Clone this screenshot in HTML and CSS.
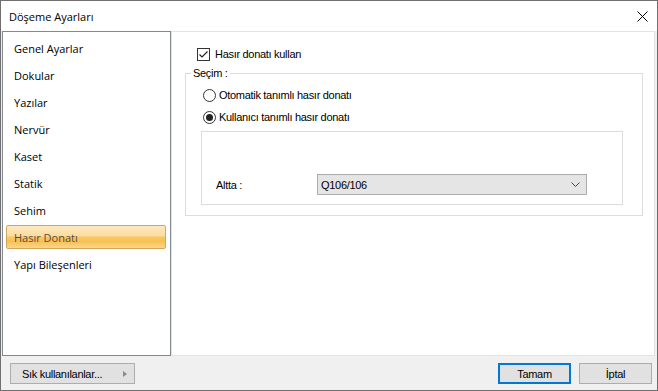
FILE: index.html
```html
<!DOCTYPE html>
<html lang="tr">
<head>
  <meta charset="UTF-8" />
  <meta name="viewport" content="width=device-width, initial-scale=1.0"/>
  <title>Döşeme Ayarları</title>
  <link rel="stylesheet" href="styles.css">
</head>
<body>

  <div class="window">
    <div class="titlebar">
      <span class="title">Döşeme Ayarları</span>
      <svg class="close" width="11" height="11" viewBox="0 0 11 11">
        <path d="M0.5 0.5 L10.5 10.5 M10.5 0.5 L0.5 10.5" stroke="#000" stroke-width="1" fill="none"/>
      </svg>
    </div>

    <div class="main">
      <ul class="nav">
        <li>Genel Ayarlar</li>
        <li>Dokular</li>
        <li>Yazılar</li>
        <li>Nervür</li>
        <li>Kaset</li>
        <li>Statik</li>
        <li>Sehim</li>
        <li class="active">Hasır Donatı</li>
        <li>Yapı Bileşenleri</li>
      </ul>

      <div class="pane">
        <div class="check-row">
          <span class="checkbox">
            <svg width="11" height="11" viewBox="0 0 11 11">
              <path d="M1.5 5.5 L4 8 L9.5 2.5" stroke="#222" stroke-width="1.2" fill="none"/>
            </svg>
          </span>
          Hasır donatı kullan
        </div>

        <fieldset class="group">
          <legend>Seçim :</legend>
          <div class="radio-row"><span class="radio"></span>Otomatik tanımlı hasır donatı</div>
          <div class="radio-row"><span class="radio checked"></span>Kullanıcı tanımlı hasır donatı</div>
          <div class="inner">
            <span class="field-label">Altta :</span>
            <div class="combo">
              <span>Q106/106</span>
              <svg width="9" height="6" viewBox="0 0 9 6">
                <path d="M0.5 0.5 L4.5 4.5 L8.5 0.5" stroke="#444" stroke-width="1" fill="none"/>
              </svg>
            </div>
          </div>
        </fieldset>
      </div>
    </div>

    <div class="footer">
      <button class="btn fav">Sık kullanılanlar...<span class="tri"></span></button>
      <div class="actions">
        <button class="btn primary">Tamam</button>
        <button class="btn">İptal</button>
      </div>
    </div>
  </div>

</body>
</html>
```

FILE: styles.css
```css
body {
  margin: 0;
  background: #f0f0f0;
}

.window {
  width: 658px;
  height: 391px;
  box-sizing: border-box;
  border: 1px solid #707070;
  background: #f0f0f0;
  display: flex;
  flex-direction: column;
  font-family: "Liberation Sans", Arial, sans-serif;
  font-size: 11px;
  color: #000;
}

.titlebar {
  height: 30px;
  background: #fff;
  display: flex;
  align-items: center;
  justify-content: space-between;
  padding: 0 9px 0 8px;
}
.title {
  font-family: "Open Sans", sans-serif;
  font-size: 11px;
}

.main {
  height: 325px;
  display: flex;
  padding: 0 2px 0 1px;
}

.nav {
  list-style: none;
  margin: 0;
  width: 169px;
  box-sizing: border-box;
  border: 1px solid #828790;
  background: #fff;
  padding: 4px 4px 0 3px;
  font-family: "Open Sans", sans-serif;
  font-size: 11px;
}
.nav li {
  height: 24px;
  box-sizing: border-box;
  border: 1px solid transparent;
  border-radius: 2px;
  padding-left: 7px;
  margin-bottom: 3px;
  display: flex;
  align-items: center;
}
.nav li.active {
  border-color: #d2a75c;
  color: #5a4a3c;
  background: linear-gradient(#fde8c0 0%, #fcdc9f 45%, #f9c864 50%, #f8c054 70%, #fbd68c 100%);
}

.pane {
  flex: 1;
  border: 1px solid #e3e3e3;
  background: #fff;
  padding: 14px 0 0 13px;
  letter-spacing: -0.3px;
}

.check-row {
  display: flex;
  align-items: center;
  height: 16px;
  padding-left: 12px;
}
.checkbox {
  width: 13px;
  height: 13px;
  box-sizing: border-box;
  border: 1px solid #333;
  margin-right: 5px;
  display: flex;
  align-items: center;
  justify-content: center;
}

.group {
  margin: 4px 0 0 0;
  width: 458px;
  box-sizing: border-box;
  border: 1px solid #dcdcdc;
  padding: 0 19px 10px 15px;
}
.group legend {
  margin-left: -10px;
  padding: 0 2px;
  line-height: 14px;
}

.radio-row {
  display: flex;
  align-items: center;
  height: 22px;
}
.radio-row:first-of-type {
  margin-top: 4px;
}
.radio {
  width: 13px;
  height: 13px;
  box-sizing: border-box;
  border: 1px solid #333;
  border-radius: 50%;
  margin: 0 3px 0 2px;
  display: flex;
  align-items: center;
  justify-content: center;
}
.radio.checked::after {
  content: "";
  width: 7px;
  height: 7px;
  border-radius: 50%;
  background: #222;
}

.inner {
  margin-top: 3px;
  border: 1px solid #dcdcdc;
  padding: 42px 0 9px 14px;
  display: flex;
  align-items: center;
}
.field-label {
  width: 101px;
}
.combo {
  width: 270px;
  height: 21px;
  box-sizing: border-box;
  border: 1px solid #adadad;
  background: #e5e5e5;
  display: flex;
  align-items: center;
  justify-content: space-between;
  padding: 0 6px 0 3px;
}

.footer {
  flex: 1;
  display: flex;
  justify-content: space-between;
  padding: 7px 5px 0 9px;
}
.btn {
  height: 21px;
  box-sizing: border-box;
  border: 1px solid #adadad;
  background: #e1e1e1;
  font-family: "Liberation Sans", Arial, sans-serif;
  font-size: 11px;
  letter-spacing: -0.3px;
  color: #000;
  padding: 0;
}
.fav {
  width: 125px;
  text-align: left;
  padding-left: 11px;
  display: flex;
  align-items: center;
}
.tri {
  margin-left: auto;
  margin-right: 7px;
  width: 0;
  height: 0;
  border-top: 3px solid transparent;
  border-bottom: 3px solid transparent;
  border-left: 4px solid #8a8a8a;
}
.actions {
  display: flex;
  gap: 8px;
}
.actions .btn {
  width: 73px;
}
.btn.primary {
  border: 2px solid #0078d7;
}
```
